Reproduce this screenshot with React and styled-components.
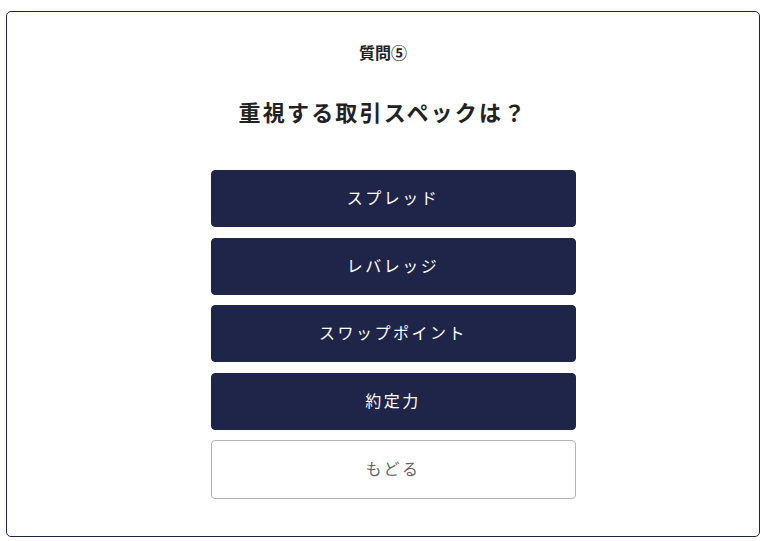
import styled, { createGlobalStyle } from "styled-components";

const GlobalStyle = createGlobalStyle`
  body {
    margin: 0;
    background: #fff;
    font-family: "Noto Sans CJK JP", "Noto Sans", sans-serif;
  }
`;

const Page = styled.div`
  padding: 11px 9px 4px 6px;
`;

const Card = styled.div`
  box-sizing: border-box;
  height: 526px;
  border: 1px solid #1f2549;
  border-radius: 5px;
  background: #fff;
  padding-top: 28px;
  display: flex;
  flex-direction: column;
  align-items: center;
`;

const Label = styled.p`
  margin: 0;
  font-size: 16px;
  line-height: 24px;
  font-weight: 700;
  color: #222;
`;

const Heading = styled.h2`
  margin: 31px 0 43px;
  font-size: 22px;
  line-height: 32px;
  font-weight: 700;
  letter-spacing: 2.2px;
  color: #222;
`;

const Choices = styled.div`
  width: 365px;
  margin-left: 20px;
  display: flex;
  flex-direction: column;
  gap: 10.5px;
`;

const Choice = styled.button`
  box-sizing: border-box;
  height: ${(p) => (p.$back ? "59px" : "57px")};
  padding: 0 0 3px;
  border-radius: 4px;
  font-family: inherit;
  font-size: 16px;
  letter-spacing: 2.5px;
  font-weight: 400;
  cursor: pointer;
  border: 1px solid ${(p) => (p.$back ? "#b3b3b3" : "#1f2549")};
  background: ${(p) => (p.$back ? "#fff" : "#1f2549")};
  color: ${(p) => (p.$back ? "#666" : "#fff")};
`;

const options = ["スプレッド", "レバレッジ", "スワップポイント", "約定力"];

export default function App() {
  return (
    <>
      <GlobalStyle />
      <Page>
        <Card>
          <Label>質問⑤</Label>
          <Heading>重視する取引スペックは？</Heading>
          <Choices>
            {options.map((o) => (
              <Choice key={o}>{o}</Choice>
            ))}
            <Choice $back>もどる</Choice>
          </Choices>
        </Card>
      </Page>
    </>
  );
}
